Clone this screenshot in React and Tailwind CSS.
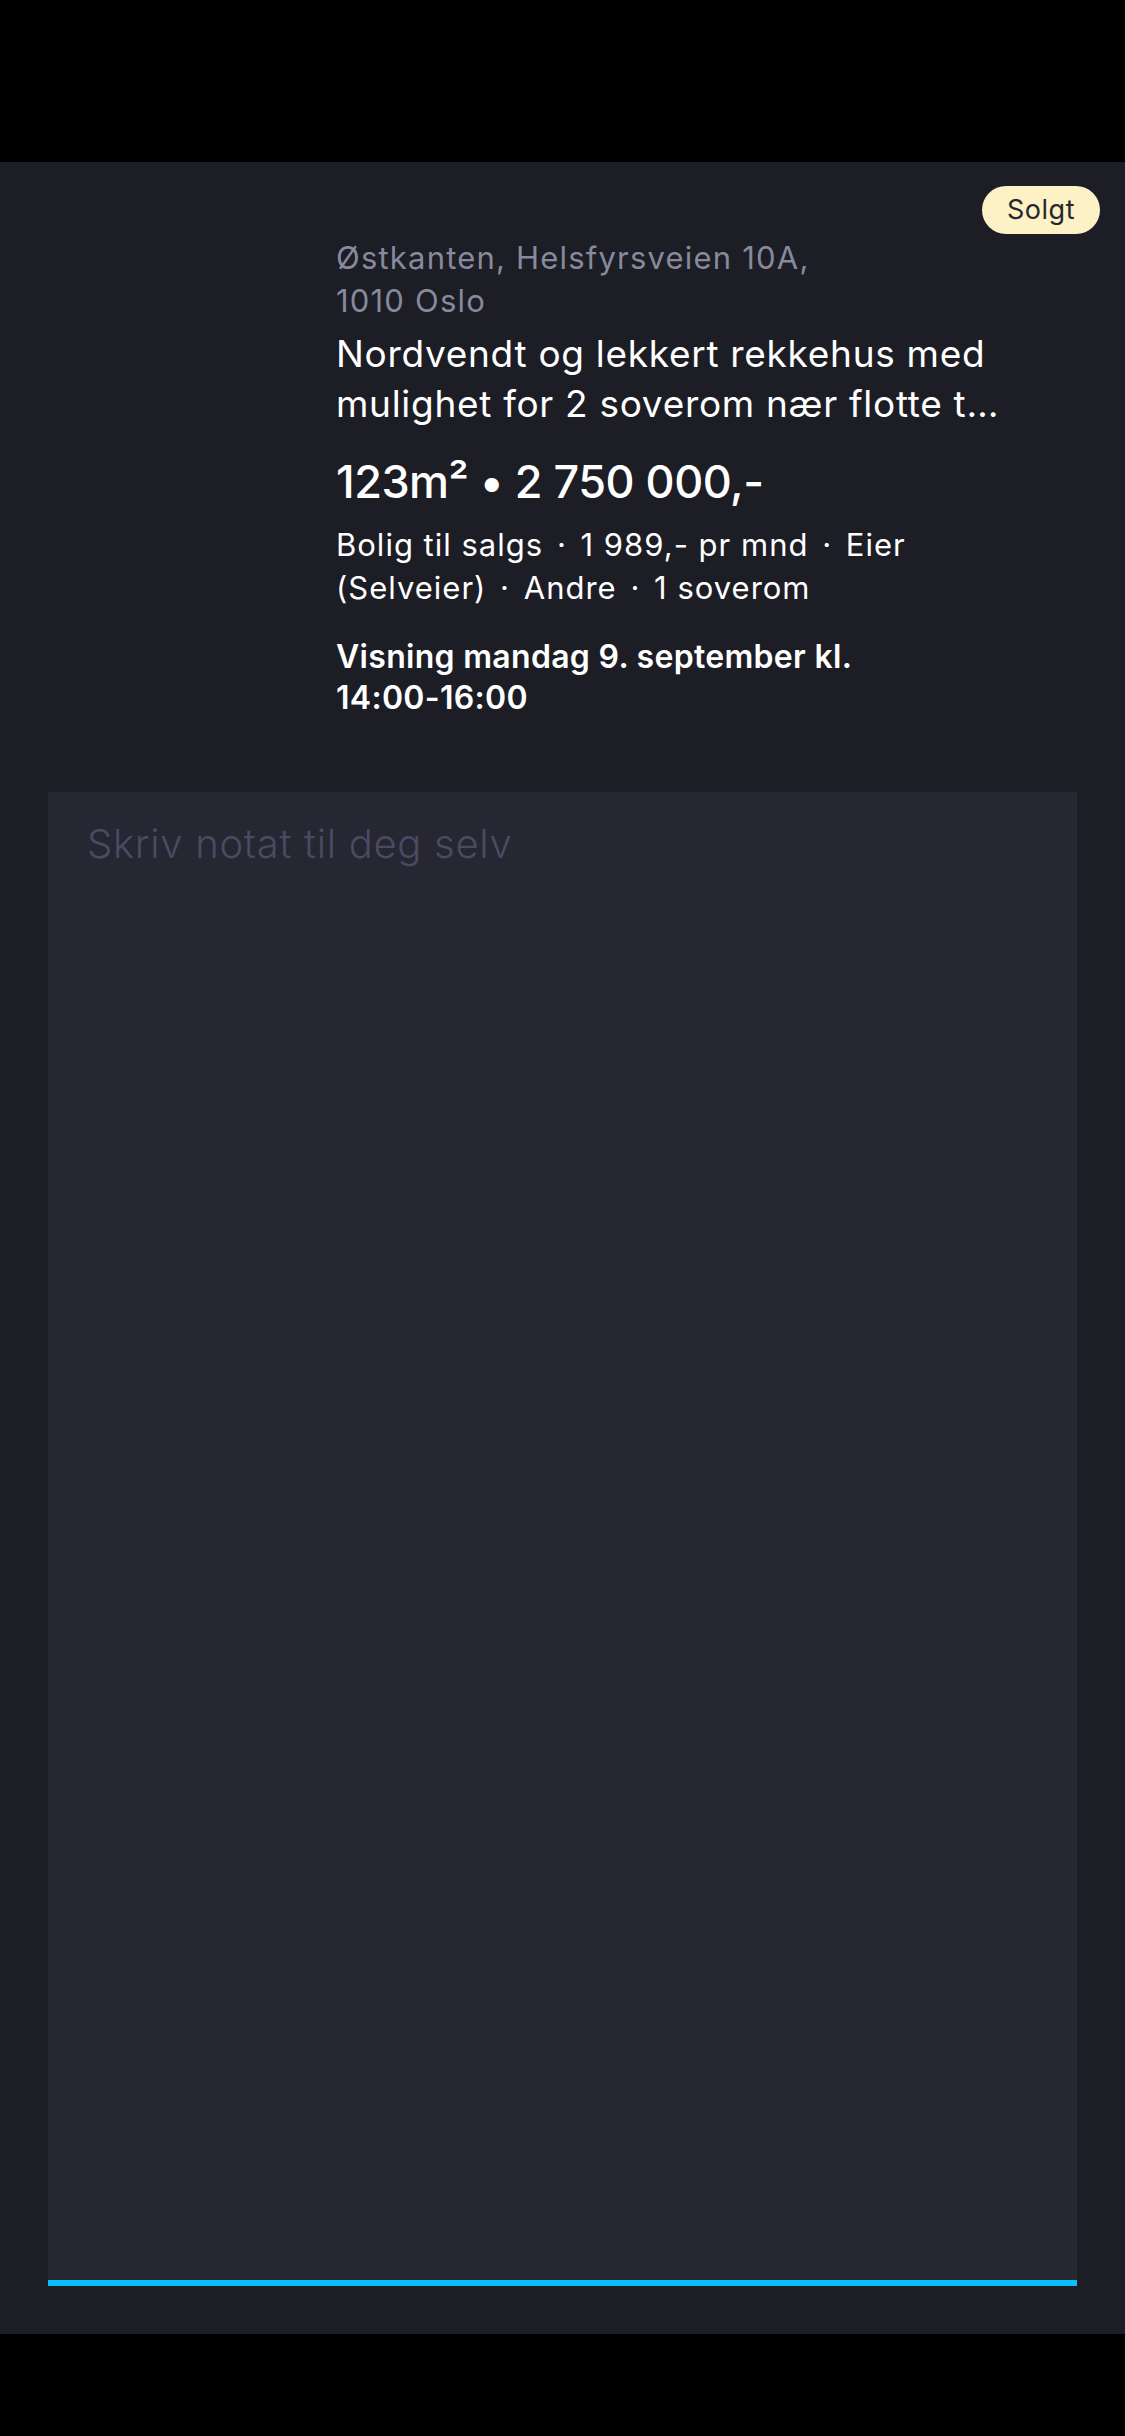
import React from 'react';

const Dot = () => <span className="mx-1">·</span>;

const Listing = () => {
  return (
    <div className="relative flex px-6 pt-[74px]">
      {/* image placeholder (empty) */}
      <div className="w-[288px] shrink-0 mr-6" />

      <span className="absolute top-6 right-[25px] flex h-12 w-[118px] items-center justify-center rounded-full bg-[#fdf1c6] text-[27px] tracking-[0.5px] text-[#27272f]">
        Solgt
      </span>

      <div className="w-[690px] flex flex-col">
        <p className="text-[31px] leading-[43px] tracking-[1.2px] text-[#868a9c]">
          Østkanten, Helsfyrsveien 10A,
          <br />
          1010 Oslo
        </p>
        <h2 className="mt-[7px] text-[37px] leading-[50px] tracking-[0.7px] text-white">
          <span className="block">Nordvendt og lekkert rekkehus med</span>
          <span className="block w-[670px] overflow-hidden text-ellipsis whitespace-nowrap">
            mulighet for 2 soverom nær flotte turområder
          </span>
        </h2>
        <p className="mt-[26px] text-[45px] leading-[54px] font-medium tracking-[-0.5px] text-white">
          123m² • 2 750 000,-
        </p>
        <p className="mt-[14px] text-[31px] leading-[43px] tracking-[1px] text-white">
          Bolig til salgs <Dot /> 1 989,- pr mnd <Dot /> Eier
          <br />
          (Selveier) <Dot /> Andre <Dot /> 1 soverom
        </p>
        <p className="mt-[27px] text-[32px] leading-[41px] font-semibold tracking-[0.3px] text-white">
          Visning mandag 9. september kl.
          <br />
          14:00-16:00
        </p>
      </div>
    </div>
  );
};

export default function App() {
  return (
    <div className="min-h-[2436px] bg-black" style={{ fontFamily: 'Inter, Roboto, "Noto Sans", sans-serif' }}>
      <div className="h-[162px] bg-black" />
      <main className="bg-[#1c1d25] pb-12">
        <Listing />
        <div className="mx-12 mt-[74px]">
          <textarea
            className="block h-[1494px] w-full resize-none border-b-[6px] border-[#06bffc] bg-[#262733] pl-[39px] pr-8 pt-[28px] text-[40px] leading-[48px] font-light tracking-[0.7px] text-white outline-none placeholder:text-[#4b4a62]"
            placeholder="Skriv notat til deg selv"
          />
        </div>
      </main>
    </div>
  );
}
